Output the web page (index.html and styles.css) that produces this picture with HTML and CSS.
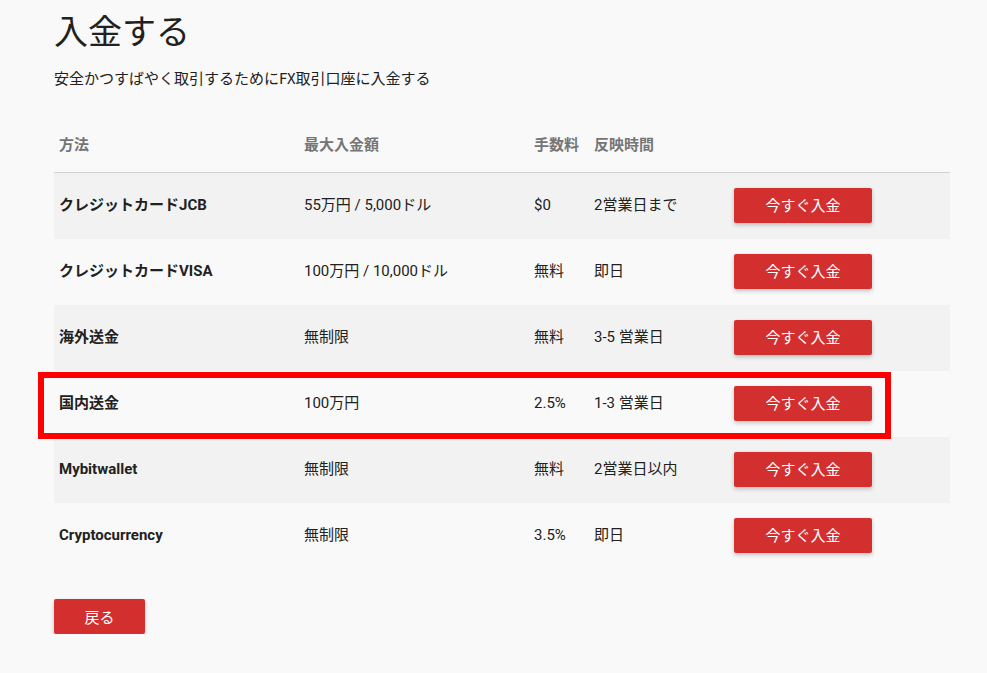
FILE: index.html
```html
<!DOCTYPE html>
<html lang="ja">
<head>
<meta charset="utf-8">
<link rel="stylesheet" href="styles.css">
</head>
<body>
<div class="page">
  <h1 class="title">入金する</h1>
  <p class="subtitle">安全かつすばやく取引するためにFX取引口座に入金する</p>
  <div class="table-wrap">
    <table class="methods">
      <colgroup>
        <col class="c1"><col class="c2"><col class="c3"><col class="c4"><col class="c5">
      </colgroup>
      <thead>
        <tr><th>方法</th><th>最大入金額</th><th>手数料</th><th>反映時間</th><th></th></tr>
      </thead>
      <tbody>
        <tr><td class="name">クレジットカードJCB</td><td>55万円 / 5,000ドル</td><td>$0</td><td>2営業日まで</td><td><button class="btn">今すぐ入金</button></td></tr>
        <tr><td class="name">クレジットカードVISA</td><td>100万円 / 10,000ドル</td><td>無料</td><td>即日</td><td><button class="btn">今すぐ入金</button></td></tr>
        <tr><td class="name">海外送金</td><td>無制限</td><td>無料</td><td>3-5 営業日</td><td><button class="btn">今すぐ入金</button></td></tr>
        <tr><td class="name">国内送金</td><td>100万円</td><td>2.5%</td><td>1-3 営業日</td><td><button class="btn">今すぐ入金</button></td></tr>
        <tr><td class="name">Mybitwallet</td><td>無制限</td><td>無料</td><td>2営業日以内</td><td><button class="btn">今すぐ入金</button></td></tr>
        <tr><td class="name">Cryptocurrency</td><td>無制限</td><td>3.5%</td><td>即日</td><td><button class="btn">今すぐ入金</button></td></tr>
      </tbody>
    </table>
    <div class="highlight"></div>
  </div>
  <button class="btn back">戻る</button>
</div>
</body>
</html>
```

FILE: styles.css
```css
html, body {
  margin: 0;
  padding: 0;
  background: #f9f9f9;
}
body {
  font-family: Roboto, "Noto Sans CJK JP", sans-serif;
  color: #212121;
  font-size: 15px;
}
.page {
  padding: 9px 37px 0 54px;
}
.title {
  margin: 0;
  font-family: "Noto Sans CJK JP", sans-serif;
  font-weight: 400;
  font-size: 34px;
  line-height: 42px;
  color: #212121;
}
.subtitle {
  margin: 17px 0 0 0;
  font-family: "Noto Sans CJK JP", sans-serif;
  font-size: 15px;
  line-height: 20px;
}
.table-wrap {
  position: relative;
  margin-top: 30px;
}
.methods {
  width: 896px;
  border-collapse: collapse;
  table-layout: fixed;
}
.c1 { width: 245px; }
.c2 { width: 230px; }
.c3 { width: 60px; }
.c4 { width: 140px; }
.c5 { width: 221px; }
.methods th {
  text-align: left;
  font-weight: 700;
  color: #757575;
  height: 54px;
  line-height: 20px;
  padding: 0 5px;
  border-bottom: 1px solid #d0d0d0;
  vertical-align: middle;
}
.methods td {
  height: 64px;
  line-height: 20px;
  padding: 0 5px 2px;
  vertical-align: middle;
}
.methods tbody tr:nth-child(odd) {
  background: #f2f2f2;
}
.methods td.name {
  font-weight: 700;
}
.btn {
  display: block;
  background: #d32f2f;
  color: #fff;
  border: none;
  border-radius: 2px;
  font-family: Roboto, "Noto Sans CJK JP", sans-serif;
  font-size: 15px;
  line-height: 20px;
  width: 138px;
  height: 35px;
  box-shadow: 0 2px 4px rgba(0,0,0,0.22);
  padding: 2px 0 0;
  cursor: pointer;
}
.highlight {
  position: absolute;
  left: -16px;
  top: 254px;
  width: 841px;
  height: 55px;
  border: 6px solid #ff0000;
}
.back {
  width: 91px;
  margin-top: 30px;
}
```
